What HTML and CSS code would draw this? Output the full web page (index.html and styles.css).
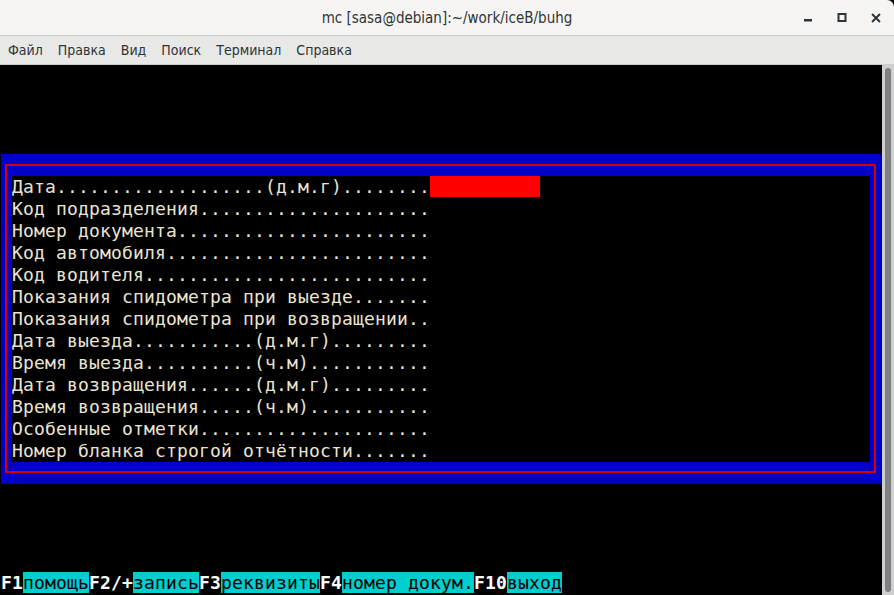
FILE: index.html
```html
<!DOCTYPE html>
<html lang="ru">
<head>
    <meta charset="UTF-8">
    <title>mc [sasa@debian]:~/work/iceB/buhg</title>
    <link rel="stylesheet" href="styles.css">
</head>
<body>

    <!-- Window title -->
    <div class="titlebar">
        <div></div>
        <div class="title">mc [sasa@debian]:~/work/iceB/buhg</div>
        <div class="controls">
            <span class="ctl"><svg width="10" height="10" viewBox="0 0 10 10"><rect x="1" y="6" width="8" height="2.5" fill="#2e3436"/></svg></span>
            <span class="ctl"><svg width="10" height="10" viewBox="0 0 10 10"><rect x="1.5" y="1" width="7" height="7" fill="none" stroke="#2e3436" stroke-width="2"/></svg></span>
            <span class="ctl"><svg width="10" height="10" viewBox="0 0 10 10"><path d="M1 1 L9 9 M9 1 L1 9" stroke="#2e3436" stroke-width="2"/></svg></span>
        </div>
    </div>

    <!-- Menu -->
    <div class="menubar">
        <span>Файл</span>
        <span>Правка</span>
        <span>Вид</span>
        <span>Поиск</span>
        <span>Терминал</span>
        <span>Справка</span>
    </div>

    <!-- Terminal -->
    <div class="terminal">
        <div class="screen">
            <div class="frame">
                <div class="box">
                    <div class="fields">
                        <div class="row">Дата...................(д.м.г)........<span class="input">          </span></div>
                        <div class="row">Код подразделения.....................</div>
                        <div class="row">Номер документа.......................</div>
                        <div class="row">Код автомобиля........................</div>
                        <div class="row">Код водителя..........................</div>
                        <div class="row">Показания спидометра при выезде.......</div>
                        <div class="row">Показания спидометра при возвращении..</div>
                        <div class="row">Дата выезда...........(д.м.г).........</div>
                        <div class="row">Время выезда..........(ч.м)...........</div>
                        <div class="row">Дата возвращения......(д.м.г).........</div>
                        <div class="row">Время возвращения.....(ч.м)...........</div>
                        <div class="row">Особенные отметки.....................</div>
                        <div class="row">Номер бланка строгой отчётности.......</div>
                    </div>
                </div>
            </div>

            <!-- Function keys -->
            <div class="keybar"><span class="key">F1</span><span class="label">помощь</span><span class="key">F2/+</span><span class="label">запись</span><span class="key">F3</span><span class="label">реквизиты</span><span class="key">F4</span><span class="label">номер докум.</span><span class="key">F10</span><span class="label">выход</span></div>
        </div>
        <div class="scrollbar">
            <div class="thumb"></div>
        </div>
    </div>

</body>
</html>
```

FILE: styles.css
```css
/* General */
body {
    margin: 0;
    width: 894px;
    height: 595px;
    overflow: hidden;
    background-color: #000000;
    font-family: "DejaVu Sans Condensed", "DejaVu Sans", sans-serif;
    display: flex;
    flex-direction: column;
}

/* Title bar */
.titlebar {
    flex-shrink: 0;
    height: 35px;
    background-color: #f6f5f4;
    border-bottom: 1px solid #cdcbc8;
    border-radius: 0 7px 0 0;
    display: grid;
    grid-template-columns: 1fr auto 1fr;
    align-items: center;
}

.title {
    font-size: 15px;
    color: #2e3436;
}

.controls {
    justify-self: end;
    display: flex;
    padding-right: 1px;
}

.ctl {
    width: 34px;
    height: 35px;
    display: flex;
    align-items: center;
    justify-content: center;
}

/* Menu bar */
.menubar {
    flex-shrink: 0;
    height: 28px;
    background-color: #e8e8e7;
    border-bottom: 1px solid #cfcdca;
    display: flex;
    align-items: center;
    gap: 15px;
    padding-left: 8px;
    font-size: 14px;
    color: #2e3436;
}

/* Terminal */
.terminal {
    flex: 1;
    min-height: 0;
    display: flex;
}

.screen {
    width: 881px;
    padding: 1px 0 1px 1px;
    display: flex;
    flex-direction: column;
    font-family: "DejaVu Sans Mono", monospace;
    font-size: 18px;
    letter-spacing: 0.163px;
    line-height: 22px;
    color: #ebe4d2;
}

.frame {
    margin-top: 88px;
    width: 880px;
    box-sizing: border-box;
    padding: 10px 5px 11px 4px;
    background-color: #0000c8;
}

.box {
    border: 2px solid #d70000;
    padding: 10px 4px 9px 5px;
}

.fields {
    background-color: #000000;
}

.row {
    height: 22px;
    white-space: pre;
}

.input {
    background-color: #ff0000;
}

.keybar {
    margin-top: auto;
    height: 22px;
    white-space: pre;
}

.key {
    color: #ffffff;
    font-weight: bold;
}

.label {
    background-color: #00cdcd;
    color: #000000;
}

/* Scrollbar */
.scrollbar {
    width: 12px;
    background-color: #cfcfcf;
    padding: 3px;
    box-sizing: border-box;
}

.thumb {
    height: 100%;
    background-color: #7e8083;
    border-radius: 3px;
}
```
